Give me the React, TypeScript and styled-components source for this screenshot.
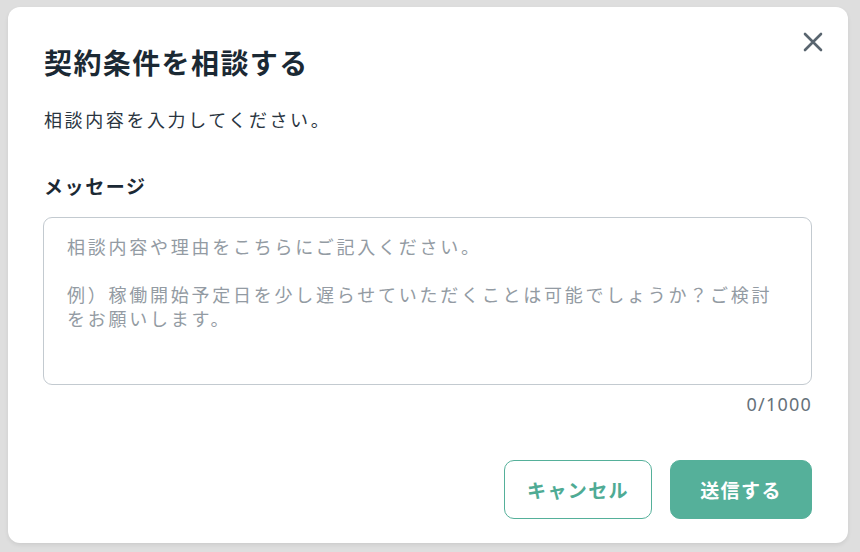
import styled, { createGlobalStyle } from 'styled-components';

const GlobalStyle = createGlobalStyle`
html, body {
  margin: 0;
  padding: 0;
  background: #dedede;
}
* {
  box-sizing: border-box;
}
`

const JP = `"Noto Sans CJK JP", "Noto Sans", sans-serif`;

function App() {
  return (
    <Page>
      <GlobalStyle />
      <Modal>
        <CloseButton aria-label="閉じる">
          <svg width="24" height="24" viewBox="0 0 24 24" fill="none">
            <path d="M4 4L20 20M20 4L4 20" stroke="#59656f" strokeWidth="2.6" strokeLinecap="round" />
          </svg>
        </CloseButton>

        <Title>契約条件を相談する</Title>
        <Lead>相談内容を入力してください。</Lead>

        <Label>メッセージ</Label>
        <Message
          placeholder={'相談内容や理由をこちらにご記入ください。\n\n例）稼働開始予定日を少し遅らせていただくことは可能でしょうか？ご検討をお願いします。'}
        />
        <Counter>0/1000</Counter>

        <Footer>
          <Button variant="outline">キャンセル</Button>
          <Button variant="filled">送信する</Button>
        </Footer>
      </Modal>
    </Page>
  )
}

const Page = styled.div`
padding: 7px 12px 9px 8px;
`

const Modal = styled.div`
position: relative;
width: 840px;
background: #ffffff;
border-radius: 12px;
box-shadow: 0 2px 4px rgba(0, 0, 0, 0.08);
padding: 37px 36px 24px 35px;
display: flex;
flex-direction: column;
font-family: ${JP};
`

const CloseButton = styled.button`
position: absolute;
top: 23px;
right: 23px;
width: 24px;
height: 24px;
padding: 0;
border: none;
background: none;
display: flex;
`

const Title = styled.h2`
margin: 0 0 0 1px;
font-size: 28px;
line-height: 36px;
font-weight: 700;
letter-spacing: 1.4px;
color: #1b2934;
`

const Lead = styled.p`
margin: 26px 0 0 1px;
font-size: 18px;
line-height: 26px;
letter-spacing: 2.6px;
color: #2a353f;
`

const Label = styled.label`
margin: 41px 0 0 1px;
font-size: 19px;
line-height: 26px;
font-weight: 700;
letter-spacing: 1.6px;
color: #1b2934;
`

const Message = styled.textarea`
margin-top: 18px;
width: 100%;
height: 168px;
padding: 16px 23px;
border: 1px solid #c3cad0;
border-radius: 9px;
resize: none;
outline: none;
font-family: ${JP};
font-size: 18px;
line-height: 24px;
letter-spacing: 2.75px;
color: #1d2b36;

&::placeholder {
  color: #939ba3;
}
`

const Counter = styled.div`
margin-top: 9px;
text-align: right;
font-family: "Noto Sans", sans-serif;
font-size: 18px;
line-height: 20px;
letter-spacing: 1.2px;
color: #66717a;
`

const Footer = styled.div`
margin-top: 46px;
display: flex;
justify-content: flex-end;
gap: 18px;
`

interface Button_Props {
  variant: 'outline' | 'filled';
}

const Button = styled.button<Button_Props>`
height: 59px;
width: ${(props) => props.variant === 'outline' ? '148px' : '142px'};
border-radius: 10px;
border: 1.5px solid #55b09a;
background: ${(props) => props.variant === 'outline' ? '#ffffff' : '#55b09a'};
color: ${(props) => props.variant === 'outline' ? '#4fab94' : '#ffffff'};
font-family: ${JP};
font-size: 19px;
font-weight: 700;
letter-spacing: 1.4px;
`

export default App;
